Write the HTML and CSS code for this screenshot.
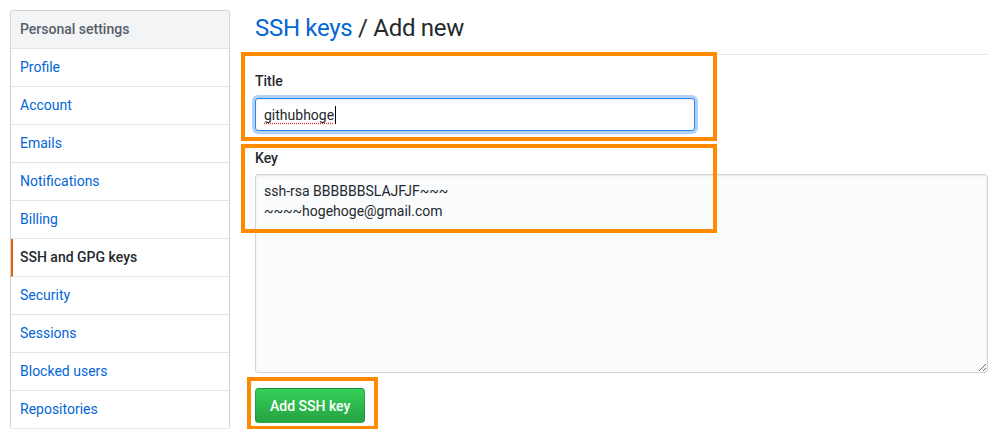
FILE: index.html
```html
<!DOCTYPE html>
<html lang="en">
<head>
    <meta charset="UTF-8">
    <title>SSH keys / Add new</title>
    <link rel="stylesheet" href="styles.css">
</head>
<body>
    <div class="page">
        <!-- Settings menu -->
        <nav class="menu">
            <div class="menu-heading">Personal settings</div>
            <a class="menu-item" href="#">Profile</a>
            <a class="menu-item" href="#">Account</a>
            <a class="menu-item" href="#">Emails</a>
            <a class="menu-item" href="#">Notifications</a>
            <a class="menu-item" href="#">Billing</a>
            <a class="menu-item selected" href="#">SSH and GPG keys</a>
            <a class="menu-item" href="#">Security</a>
            <a class="menu-item" href="#">Sessions</a>
            <a class="menu-item" href="#">Blocked users</a>
            <a class="menu-item" href="#">Repositories</a>
        </nav>

        <div class="main">
            <div class="subhead">
                <h2 class="subhead-heading"><a href="#">SSH keys</a> / Add new</h2>
            </div>

            <form>
                <div class="form-group">
                    <label class="form-label">Title</label>
                    <div class="form-control title-input focus">
                        <span class="misspelled">githubhoge</span><span class="caret"></span>
                    </div>
                </div>

                <div class="form-group">
                    <label class="form-label" for="key">Key</label>
                    <textarea id="key" class="form-control key-input">ssh-rsa BBBBBBSLAJFJF~~~
~~~~hogehoge@gmail.com</textarea>
                </div>

                <button type="button" class="btn-primary">Add SSH key</button>
            </form>

            <!-- annotation frames -->
            <div class="mark mark-title"></div>
            <div class="mark mark-key"></div>
            <div class="mark mark-btn"></div>
        </div>
    </div>
</body>
</html>
```

FILE: styles.css
```css
:root {
    --text-color: #24292e;
    --link-color: #0366d6;
    --muted-color: #586069;
    --border-color: #d1d5da;
    --divider-color: #e1e4e8;
    --mark-color: #ff8a00;
}

body {
    margin: 0;
    font-family: Roboto, "Liberation Sans", sans-serif;
    font-size: 14px;
    line-height: 21px;
    color: var(--text-color);
    background: #fff;
    overflow: hidden;
}

a {
    color: var(--link-color);
    text-decoration: none;
}

.page {
    display: flex;
    gap: 25px;
    padding: 10px 8px 0 10px;
}

/* Menu */
.menu {
    width: 218px;
    flex-shrink: 0;
    border: 1px solid var(--border-color);
    border-radius: 3px;
    border-bottom: none;
    display: flex;
    flex-direction: column;
}

.menu-heading {
    padding: 8px 9px;
    font-weight: 500;
    color: var(--muted-color);
    background: #f3f4f6;
    border-bottom: 1px solid var(--divider-color);
    border-radius: 3px 3px 0 0;
}

.menu-item {
    padding: 8px 9px;
    border-bottom: 1px solid var(--divider-color);
}

.menu-item.selected {
    color: var(--text-color);
    font-weight: 500;
    border-left: 2px solid #e36209;
    padding-left: 7px;
}

/* Main */
.main {
    flex: 1;
    position: relative;
}

.subhead {
    border-bottom: 1px solid var(--divider-color);
    padding-bottom: 8px;
    margin-bottom: 16px;
}

.subhead-heading {
    margin: 0;
    font-size: 24px;
    font-weight: 400;
    line-height: 36px;
    letter-spacing: -0.3px;
}

.form-group {
    margin-bottom: 17px;
}

.form-label {
    display: block;
    font-weight: 500;
    margin-bottom: 6px;
}

.form-control {
    box-sizing: border-box;
    padding: 6px 8px;
    font-family: inherit;
    font-size: 14px;
    line-height: 20px;
    color: var(--text-color);
    border: 1px solid var(--border-color);
    border-radius: 3px;
    background: #fafbfc;
    box-shadow: inset 0 1px 2px rgba(27, 31, 35, 0.075);
}

.title-input {
    width: 440px;
    height: 33px;
    display: flex;
    align-items: center;
}

.form-control.focus {
    background: #fff;
    border-color: #2188ff;
    box-shadow: inset 0 1px 2px rgba(27, 31, 35, 0.075), 0 0 0 3px rgba(3, 102, 214, 0.3);
}

.misspelled {
    text-decoration: underline dotted #e5352b;
    text-underline-offset: 3px;
}

.caret {
    width: 1px;
    height: 18px;
    background: #000;
    margin-left: 1px;
}

.key-input {
    display: block;
    width: 100%;
    height: 199px;
    margin-top: -1px;
    resize: vertical;
}

.form-group + .btn-primary {
    margin-top: -2px;
}

.btn-primary {
    padding: 6px 14px;
    height: 35px;
    font-family: inherit;
    font-size: 14px;
    font-weight: 500;
    line-height: 20px;
    color: #fff;
    background: linear-gradient(-180deg, #34d058 0%, #28a745 90%);
    border: 1px solid rgba(27, 31, 35, 0.2);
    border-radius: 4px;
    cursor: pointer;
}

/* Annotation frames */
.mark {
    position: absolute;
    border: 4px solid var(--mark-color);
    box-sizing: border-box;
    pointer-events: none;
}

.mark-title {
    left: -14px;
    top: 42px;
    width: 476px;
    height: 89px;
}

.mark-key {
    left: -14px;
    top: 134px;
    width: 476px;
    height: 89px;
}

.mark-btn {
    left: -8px;
    top: 367px;
    width: 131px;
    height: 53px;
}
```
